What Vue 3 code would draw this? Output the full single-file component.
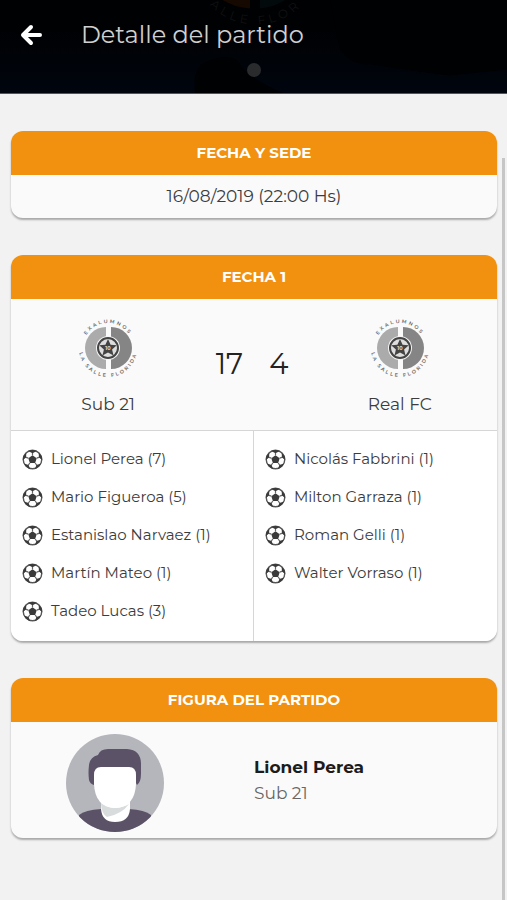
<script setup>
const teams = [
  {
    name: 'Sub 21',
    score: 17,
    scorers: [
      { name: 'Lionel Perea', goals: 7 },
      { name: 'Mario Figueroa', goals: 5 },
      { name: 'Estanislao Narvaez', goals: 1 },
      { name: 'Martín Mateo', goals: 1 },
      { name: 'Tadeo Lucas', goals: 3 },
    ],
  },
  {
    name: 'Real FC',
    score: 4,
    scorers: [
      { name: 'Nicolás Fabbrini', goals: 1 },
      { name: 'Milton Garraza', goals: 1 },
      { name: 'Roman Gelli', goals: 1 },
      { name: 'Walter Vorraso', goals: 1 },
    ],
  },
]
</script>

<template>
  <div class="screen">
    <header class="topbar">
      <svg class="backdrop" viewBox="0 0 507 94" preserveAspectRatio="xMidYMid slice" aria-hidden="true">
        <defs>
          <linearGradient id="night" x1="0" y1="0" x2="0" y2="1">
            <stop offset="0.3" stop-color="#000103" />
            <stop offset="0.75" stop-color="#00040a" />
            <stop offset="1" stop-color="#00050e" />
          </linearGradient>
          <path id="backdrop-arc" d="M192 -39A64 64 0 0 0 320 -39" />
        </defs>
        <rect width="507" height="94" fill="url(#night)" />
        <path d="M195 94Q192 68 206 62Q232 52 240 64Q246 78 284 94Z" fill="#000103" />
        <path d="M340 50Q350 66 372 65Q400 70 450 76L507 70V0H330Z" fill="#000103" />
        <path d="M222 0H250V9Q234 8 222 0Z" fill="#160902" />
        <path d="M260 0H286Q274 8 260 9Z" fill="#020a0c" />
        <text class="backdrop-text"><textPath href="#backdrop-arc" startOffset="50%" text-anchor="middle">ALLE FLOR</textPath></text>
      </svg>
      <button class="back" type="button" aria-label="Volver">
        <svg viewBox="0 0 24 24" aria-hidden="true">
          <path d="M12 4L4 12L12 20M4 12H21" fill="none" stroke="#fff" stroke-width="4" stroke-linecap="round" stroke-linejoin="round" />
        </svg>
      </button>
      <h1>Detalle del partido</h1>
      <span class="dot"></span>
    </header>

    <main>
      <section class="card">
        <h2>FECHA Y SEDE</h2>
        <p class="date">16/08/2019 (22:00 Hs)</p>
      </section>

      <section class="card">
        <h2>FECHA 1</h2>
        <div class="match">
          <div v-for="(team, i) in teams" :key="team.name" class="team" :class="{ away: i === 1 }">
            <svg class="crest" viewBox="0 0 60 60" aria-hidden="true">
              <defs>
                <path :id="`top-${i}`" d="M5 30A25 25 0 0 1 55 30" />
                <path :id="`bottom-${i}`" d="M1 26V30A29 29 0 0 0 59 30V26" />
              </defs>
              <path d="M28 9A21 21 0 0 0 28 51Z" fill="#ababab" />
              <path d="M33 9A21 21 0 0 1 33 51Z" fill="#858585" />
              <circle cx="30" cy="30" r="12" fill="#f4f4f4" />
              <circle cx="30" cy="30" r="10" fill="#ddd" stroke="#444" stroke-width="2" />
              <path d="M30 21L32.6 26.8L38.8 27.3L34.1 31.4L35.5 37.6L30 34.4L24.5 37.6L25.9 31.4L21.2 27.3L27.4 26.8Z" fill="#444" />
              <text class="crest-number" x="30" y="32" text-anchor="middle">10</text>
              <text class="crest-text"><textPath :href="`#top-${i}`" startOffset="50%" text-anchor="middle">EXALUMNOS</textPath></text>
              <text class="crest-text"><textPath :href="`#bottom-${i}`" startOffset="50%" text-anchor="middle">LA SALLE FLORIDA</textPath></text>
            </svg>
            <span class="team-name">{{ team.name }}</span>
          </div>
          <div class="score">
            <span v-for="team in teams" :key="team.name">{{ team.score }}</span>
          </div>
        </div>
        <div class="scorers">
          <ul v-for="team in teams" :key="team.name">
            <li v-for="scorer in team.scorers" :key="scorer.name">
              <svg class="ball" viewBox="0 0 24 24" aria-hidden="true">
                <circle cx="12" cy="12" r="10.6" fill="#fff" stroke="#555" stroke-width="1.6" />
                <path d="M12 7L16.8 10.5L15 16H9L7.2 10.5Z" fill="#3a3a3a" />
                <path d="M12 7V4M16.8 10.5L20 9.3M15 16L17.3 19M9 16L6.7 19M7.2 10.5L4 9.3" stroke="#666" stroke-width="1.4" />
                <path d="M7 2.2L12 4.8L17 2.2Q12 0 7 2.2ZM19 4.4L19.4 9.6L23 12.6Q23.4 8 19 4.4ZM21.6 16.6L16.6 18.4L14.4 23Q19.5 21.6 21.6 16.6ZM2.4 16.6L7.4 18.4L9.6 23Q4.5 21.6 2.4 16.6ZM5 4.4L4.6 9.6L1 12.6Q0.6 8 5 4.4Z" fill="#3a3a3a" />
              </svg>
              <span>{{ scorer.name }} ({{ scorer.goals }})</span>
            </li>
          </ul>
        </div>
      </section>

      <section class="card">
        <h2>FIGURA DEL PARTIDO</h2>
        <div class="figure">
          <div class="portrait">
            <svg viewBox="0 0 98 98" role="img" aria-label="Lionel Perea">
              <defs>
                <clipPath id="portrait-clip"><circle cx="49" cy="49" r="49" /></clipPath>
              </defs>
              <g clip-path="url(#portrait-clip)">
                <rect width="98" height="98" fill="#b5b6bc" />
                <path d="M13 81Q19 76 35 75H63Q79 76 85 81V98H13Z" fill="#5b5267" />
                <path d="M35 65H64V75Q63 88 49 88Q36 88 35 75Z" fill="#fff" />
                <path d="M35 69Q42 74 50 74Q58 73 63 70Q56 80 41 83Q35 79 35 69Z" fill="#d9dcdd" />
                <path d="M23 46Q22 39 23 31Q24 23 32 21Q34 15 42 15H61Q75 16 75 30V40Q75 48 71 51L63 36H34L28 51Q24 50 23 46Z" fill="#5b5267" />
                <path d="M28 41Q28 33 35 33H63Q70 33 70 41V50Q69 73 49 74Q29 73 28 50Z" fill="#fff" />
              </g>
            </svg>
          </div>
          <div class="player">
            <strong>Lionel Perea</strong>
            <span>Sub 21</span>
          </div>
        </div>
      </section>
    </main>
    <span class="scroll-thumb"></span>
  </div>
</template>

<style>
body {
  background: #f2f2f2;
}
</style>

<style scoped>
.screen {
  position: relative;
  min-height: 100vh;
  font-family: Montserrat, Inter, "Liberation Sans", sans-serif;
  color: #3c3c3c;
  background: #f2f2f2;
}

h1,
h2,
p,
ul {
  margin: 0;
  padding: 0;
}

.topbar {
  position: relative;
  display: flex;
  align-items: center;
  gap: 38px;
  height: 94px;
  box-sizing: border-box;
  padding: 0 19px 24px;
  overflow: hidden;
  background: #000103;
  border-bottom: 1px solid #555;
}

.backdrop {
  position: absolute;
  inset: 0;
  width: 100%;
  height: 100%;
}

.backdrop-text {
  font-size: 12px;
  letter-spacing: 4px;
  fill: #101111;
}

.back {
  position: relative;
  display: flex;
  padding: 0;
  border: 0;
  background: none;
}

.back svg {
  width: 24px;
  height: 24px;
}

h1 {
  position: relative;
  font-size: 24px;
  line-height: 32px;
  font-weight: 400;
  color: #d0d0d0;
}

.dot {
  position: absolute;
  left: 50%;
  bottom: 16px;
  width: 14px;
  height: 14px;
  margin-left: -7px;
  border-radius: 50%;
  background: #292b2d;
}

main {
  display: flex;
  flex-direction: column;
  gap: 37px;
  padding: 37px 10px 37px 11px;
}

.card {
  overflow: hidden;
  border-radius: 12px;
  background: #fafafa;
  box-shadow: 0 2px 2px rgba(0, 0, 0, 0.3);
}

h2 {
  font-size: 15px;
  line-height: 44px;
  font-weight: 700;
  text-align: center;
  color: #fff;
  background: #f2910f;
}

.date {
  font-size: 17px;
  line-height: 43px;
  text-align: center;
}

.match {
  display: grid;
  grid-template-columns: 2fr 1fr 2fr;
  padding: 19px 0 14px;
}

.team {
  grid-area: 1 / 1;
  display: flex;
  flex-direction: column;
  align-items: center;
  gap: 14px;
}

.team.away {
  grid-area: 1 / 3;
}

.crest {
  width: 60px;
  height: 60px;
  overflow: visible;
}

.crest-text {
  font-size: 5px;
  font-weight: 600;
  letter-spacing: 2px;
  fill: #666;
}

.crest-number {
  font-size: 5px;
  font-weight: 700;
  fill: #ddd;
}

.team-name {
  font-size: 17px;
  line-height: 24px;
}

.score {
  grid-area: 1 / 2;
  display: flex;
  align-items: center;
  justify-content: center;
  gap: 26px;
  padding: 0 4px 6px 0;
  font-size: 29px;
  line-height: 32px;
  color: #222;
}

.scorers {
  display: grid;
  grid-template-columns: 1fr 1fr;
  background: #fff;
  border-top: 1px solid #d6d6d6;
}

.scorers ul {
  padding: 9px 0 11px 11px;
  list-style: none;
}

.scorers ul:first-child {
  border-right: 1px solid #d6d6d6;
}

.scorers li {
  display: flex;
  align-items: center;
  gap: 8px;
  font-size: 15px;
  line-height: 38px;
}

.ball {
  flex: none;
  width: 21px;
  height: 21px;
}

.figure {
  display: grid;
  grid-template-columns: 1fr 1fr;
  align-items: center;
  padding: 12px 0 6px;
}

.portrait {
  display: flex;
  justify-content: center;
  padding-right: 35px;
}

.portrait svg {
  width: 98px;
  height: 98px;
}

.player {
  display: flex;
  flex-direction: column;
  padding-bottom: 6px;
  font-size: 17px;
  line-height: 26px;
}

.player strong {
  font-weight: 700;
  color: #1c1c1c;
}

.player span {
  color: #666;
}

.scroll-thumb {
  position: absolute;
  top: 158px;
  right: 2px;
  bottom: 0;
  width: 3px;
  background: #c6c6c6;
}
</style>
